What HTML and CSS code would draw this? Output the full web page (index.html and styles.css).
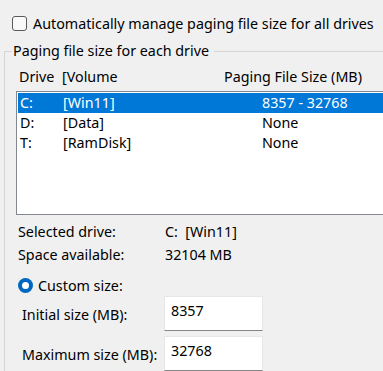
FILE: index.html
```html
<!DOCTYPE html>
<html>
<head>
<meta charset="utf-8">
<link rel="stylesheet" href="styles.css">
</head>
<body>
<div class="auto-row">
  <span class="checkbox"></span>
  <span class="auto-label">Automatically manage paging file size for all drives</span>
</div>
<fieldset class="group">
  <legend class="group-title">Paging file size for each drive</legend>
  <div class="list-header">
    <span class="col-drive">Drive</span>
    <span class="col-volume">[Volume</span>
    <span class="col-size">Paging File Size (MB)</span>
  </div>
  <div class="listbox">
    <div class="row selected"><span class="cell-drive">C:</span><span class="cell-volume">[Win11]</span><span class="cell-size">8357 - 32768</span></div>
    <div class="row"><span class="cell-drive">D:</span><span class="cell-volume">[Data]</span><span class="cell-size">None</span></div>
    <div class="row"><span class="cell-drive">T:</span><span class="cell-volume">[RamDisk]</span><span class="cell-size">None</span></div>
  </div>
  <div class="info">
    <div class="info-row"><span class="info-label">Selected drive:</span><span class="info-value">C:&nbsp;&nbsp;[Win11]</span></div>
    <div class="info-row"><span class="info-label">Space available:</span><span class="info-value">32104 MB</span></div>
  </div>
  <div class="radio-row">
    <span class="radio"><span class="radio-dot"></span></span>
    <span class="radio-label">Custom size:</span>
  </div>
  <div class="field-row">
    <span class="field-label">Initial size (MB):</span>
    <span class="field-input">8357</span>
  </div>
  <div class="field-row">
    <span class="field-label">Maximum size (MB):</span>
    <span class="field-input">32768</span>
  </div>
</fieldset>
</body>
</html>
```
FILE: styles.css
```css
html, body {
  margin: 0;
  padding: 0;
  background: #f0f0f0;
  overflow: hidden;
}
body {
  width: 383px;
  height: 371px;
  display: flex;
  flex-direction: column;
  font-family: "Noto Sans", "DejaVu Sans", sans-serif;
  font-size: 14.3px;
  color: #000;
}
.auto-row {
  display: flex;
  align-items: center;
  margin: 16px 0 0 12px;
  height: 15px;
  flex: none;
}
.checkbox {
  box-sizing: border-box;
  width: 15px;
  height: 15px;
  border: 1px solid #5a5a5a;
  border-radius: 3px;
  background: #f9f9f9;
  flex: none;
}
.auto-label {
  margin-left: 6px;
  white-space: nowrap;
  line-height: 15px;
}
.group {
  flex: 1;
  min-height: 0;
  margin: 10px 0 0 4px;
  padding: 0;
  border: 1px solid #d5d5d5;
  border-right: none;
  border-bottom: none;
  min-width: 0;
  overflow: hidden;
}
.group-title {
  margin-left: 7px;
  padding: 0 5px 0 1px;
  line-height: 20px;
  white-space: nowrap;
}
.list-header {
  display: flex;
  margin: 6px 0 0 14px;
  line-height: 20px;
  white-space: nowrap;
}
.col-drive { width: 43px; }
.col-volume { width: 162px; }
.listbox {
  box-sizing: border-box;
  margin: 4px 0 0 11px;
  height: 124px;
  border: 1px solid #828790;
  border-right: none;
  background: #fff;
  padding: 1px 0 0 1px;
}
.row {
  display: flex;
  height: 20px;
  line-height: 20px;
  padding-left: 2px;
  white-space: nowrap;
}
.row.selected {
  background: #0078d7;
  color: #fff;
}
.cell-drive { width: 43px; }
.cell-volume { width: 199px; }
.info {
  margin: 5px 0 0 13px;
}
.info-row {
  display: flex;
  height: 23px;
  line-height: 23px;
  white-space: nowrap;
}
.info-label { width: 147px; }
.radio-row {
  display: flex;
  align-items: center;
  margin: 12px 0 0 13px;
  height: 15px;
}
.radio {
  box-sizing: border-box;
  width: 15px;
  height: 15px;
  border-radius: 50%;
  background: #0067c0;
  display: flex;
  align-items: center;
  justify-content: center;
  flex: none;
}
.radio-dot {
  width: 7px;
  height: 7px;
  border-radius: 50%;
  background: #fff;
}
.radio-label {
  margin-left: 5px;
  line-height: 15px;
}
.field-row {
  display: flex;
  align-items: center;
  height: 35px;
  margin-left: 17px;
}
.radio-row + .field-row { margin-top: 3px; }
.field-row + .field-row { margin-top: 5px; }
.field-label {
  width: 142px;
  white-space: nowrap;
  padding-top: 2px;
}
.field-input {
  box-sizing: border-box;
  width: 99px;
  height: 35px;
  background: #fff;
  border: 1px solid #e6e6e6;
  border-bottom: 1px solid #868686;
  padding: 4px 0 0 6px;
  line-height: 20px;
}
```
